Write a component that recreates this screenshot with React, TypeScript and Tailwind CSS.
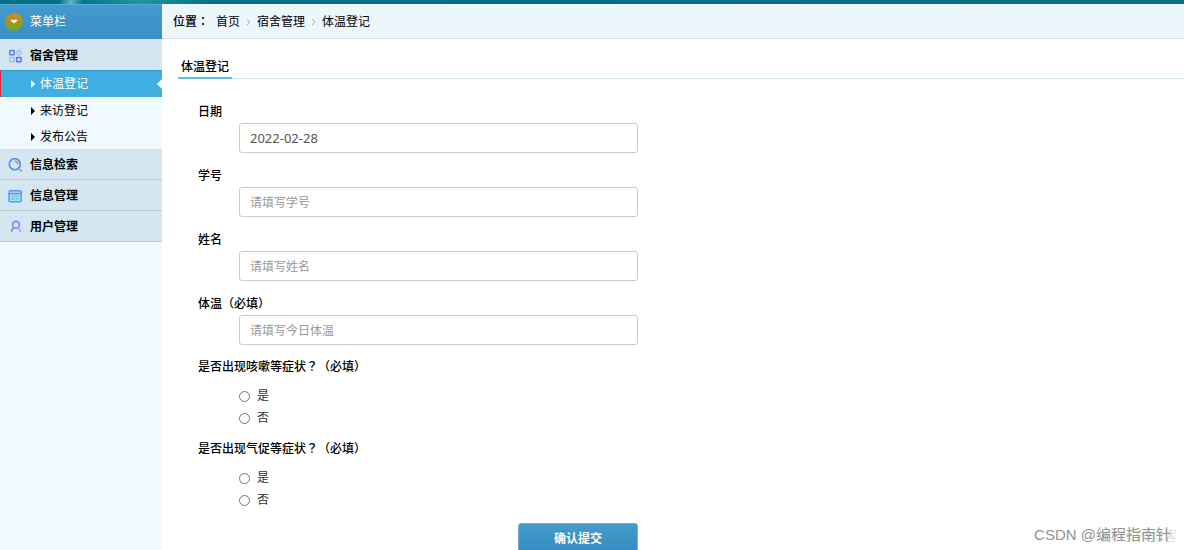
import { useState } from "react";

type Field = { id: string; label: string; placeholder?: string; value?: string };

const fields: Field[] = [
  { id: "date", label: "日期", value: "2022-02-28" },
  { id: "student", label: "学号", placeholder: "请填写学号" },
  { id: "name", label: "姓名", placeholder: "请填写姓名" },
  { id: "temperature", label: "体温（必填）", placeholder: "请填写今日体温" },
];

const questions = [
  { id: "cough", label: "是否出现咳嗽等症状", note: "（必填）" },
  { id: "breath", label: "是否出现气促等症状", note: "（必填）" },
];

const submenu = ["体温登记", "来访登记", "发布公告"];

function MenuIcon() {
  return (
    <svg viewBox="0 0 18 18" className="size-[18px]" aria-hidden="true">
      <defs>
        <linearGradient id="badge" x1="0" y1="0" x2="0" y2="1">
          <stop offset="0" stopColor="#d88a12" />
          <stop offset="0.5" stopColor="#a9931a" />
          <stop offset="1" stopColor="#68ad1c" />
        </linearGradient>
      </defs>
      <circle cx="9" cy="9" r="8.8" fill="url(#badge)" />
      <path d="M5.8 6.8h6.4v1L9 10.6 5.8 7.8z" fill="#fff" />
    </svg>
  );
}

function GridIcon() {
  return (
    <svg viewBox="0 0 14 14" className="size-3.5" fill="none" strokeWidth="1.5" aria-hidden="true">
      <rect x="1.8" y="1.4" width="4.4" height="4.4" rx="0.5" stroke="#5b7cf0" />
      <path d="M10.8 0.9l2.7 2.7-2.7 2.7-2.7-2.7z" stroke="#a9c1f5" />
      <rect x="1.8" y="8.4" width="4.4" height="4.4" rx="0.5" stroke="#a9bdf8" />
      <rect x="8.6" y="8.4" width="4.4" height="4.4" rx="0.5" stroke="#5b72f0" />
    </svg>
  );
}

function SearchIcon() {
  return (
    <svg viewBox="0 0 14 14" className="size-3.5" fill="none" strokeWidth="1.6" strokeLinecap="round" aria-hidden="true">
      <circle cx="6.8" cy="6.2" r="5.5" stroke="#4593f3" />
      <path d="M7 3.3a3 3 0 0 1 2.7 2.7M11.8 11.5l1.7 1.5" stroke="#f06fae" />
    </svg>
  );
}

function WindowIcon() {
  return (
    <svg viewBox="0 0 14 14" className="size-3.5" fill="none" aria-hidden="true">
      <rect x="1" y="1.7" width="12.2" height="11" rx="1.2" fill="#b5d9f2" stroke="#5d96f3" strokeWidth="1.5" />
      <path d="M1 4.6h12" stroke="#5d96f3" strokeWidth="1.5" />
      <path d="M3.2 7.2h2.2M6.4 7.2h4.4M3.2 9.8h4M8.3 9.8h2.5" stroke="#58d5c3" strokeWidth="1.5" />
    </svg>
  );
}

function UserIcon() {
  return (
    <svg viewBox="0 0 14 14" className="size-3.5" fill="none" strokeWidth="1.6" strokeLinecap="round" aria-hidden="true">
      <circle cx="8" cy="4.8" r="3.4" stroke="#8a7df2" />
      <path d="M5.8 7.8Q3.8 9 3.6 11.5" stroke="#8a7df2" />
      <path d="M10.2 7.8Q12 9 12.5 11.5" stroke="#d68cf4" />
    </svg>
  );
}

function Chevron() {
  return (
    <svg viewBox="0 0 5 8" className="mx-[6px] h-2 w-[5px]" fill="none" stroke="#98b3bd" aria-hidden="true">
      <path d="M1 1l3 3-3 3" />
    </svg>
  );
}

const sections = [
  { title: "信息检索", Icon: SearchIcon },
  { title: "信息管理", Icon: WindowIcon },
  { title: "用户管理", Icon: UserIcon },
];

export default function App() {
  const [answers, setAnswers] = useState<Record<string, string>>({});

  return (
    <div className="relative flex h-screen flex-col overflow-hidden bg-white font-['Noto_Sans','Noto_Sans_CJK_SC',sans-serif] text-xs text-black">
      <header className="h-1 shrink-0 bg-[linear-gradient(100deg,#087084_0%,#087084_5%,#5eb5c5_6%,#087689_7%,#2591a2_12%,#066e84_18%,#056c86_45%,#087084_100%)]" />
      <div className="flex min-h-0 flex-1">
        <aside className="flex w-[162px] shrink-0 flex-col bg-[#f0f9fd]">
          <h2 className="flex h-[35px] items-center gap-[7px] border-t border-[#54afe0] bg-linear-to-b from-[#4599cd] to-[#3790c6] pl-[5px] text-white">
            <MenuIcon />
            菜单栏
          </h2>
          <nav>
            <a href="#dorm" className="flex h-[31px] items-center gap-2 bg-[#d4e7f0] pt-0.5 pl-2 font-bold">
              <GridIcon />
              宿舍管理
            </a>
            <ul>
              {submenu.map((item, index) => (
                <li key={item}>
                  <a
                    href={`#sub-${index}`}
                    className={
                      index === 0
                        ? "flex h-[27px] items-center border-t border-l border-t-[#3598ca] border-l-[#e22b32] bg-[#3eafe0] pl-[30px] text-white"
                        : "flex h-[26px] items-center pt-0.5 pl-[31px]"
                    }
                  >
                    <svg viewBox="0 0 4 8" className="mr-[5px] h-2 w-1" fill="currentColor" aria-hidden="true">
                      <path d="M0 0l4 4-4 4z" />
                    </svg>
                    {item}
                    {index === 0 && (
                      <svg viewBox="0 0 5 10" className="ml-auto h-2.5 w-[5px]" fill="#fff" aria-hidden="true">
                        <path d="M5 0v10L0 5z" />
                      </svg>
                    )}
                  </a>
                </li>
              ))}
            </ul>
            {sections.map(({ title, Icon }) => (
              <a
                key={title}
                href={`#${title}`}
                className="flex h-[31px] items-center gap-2 border-b border-[#b5cad3] bg-[#d4e7f0] pt-0.5 pl-2 font-bold"
              >
                <Icon />
                {title}
              </a>
            ))}
          </nav>
        </aside>

        <main className="min-w-0 flex-1">
          <nav className="flex h-[35px] items-center border-b border-[#d5e4ea] bg-[#edf6fa] pt-0.5 pl-[11px]">
            <span className="mr-[7px] font-medium">
              位置<span className="font-['Noto_Sans_CJK_TC',sans-serif] leading-none">：</span>
            </span>
            <a href="#home">首页</a>
            <Chevron />
            <a href="#dorm">宿舍管理</a>
            <Chevron />
            <a href="#temperature">体温登记</a>
          </nav>

          <div className="pl-4">
            <div className="mt-[15px] flex border-b border-[#d3e5ea]">
              <h1 className="-mb-px border-b-2 border-[#5bc0e8] px-[3px] pt-0.5 text-xs leading-[21px] font-medium">体温登记</h1>
            </div>

            <form className="mt-5 max-w-[460px] pl-5" onSubmit={(e) => e.preventDefault()}>
              {fields.map((f) => (
                <div key={f.id} className="mb-2.5">
                  <label htmlFor={f.id} className="block pt-0.5 leading-[22px] font-medium">
                    {f.label}
                  </label>
                  <div className="pl-[41px]">
                    <input
                      id={f.id}
                      type="text"
                      defaultValue={f.value}
                      placeholder={f.placeholder}
                      className="block h-[30px] w-full rounded-[3px] border border-[#ccc] bg-white px-2.5 text-[13px] text-[#555] placeholder:text-xs placeholder:text-[#999]"
                    />
                  </div>
                </div>
              ))}
              {questions.map((q) => (
                <fieldset key={q.id} className="mb-2">
                  <legend className="mb-1.5 leading-6 font-medium">
                    {q.label}
                    <span className="font-['Noto_Sans_CJK_TC',sans-serif] leading-none">？</span>
                    {q.note}
                  </legend>
                  {["是", "否"].map((option) => (
                    <label key={option} className="flex h-[22px] items-center gap-[7px] pl-[41px] text-[#333]">
                      <input
                        type="radio"
                        name={q.id}
                        value={option}
                        checked={answers[q.id] === option}
                        onChange={() => setAnswers({ ...answers, [q.id]: option })}
                        className="size-[11px] appearance-none rounded-full border border-[#767676] bg-white checked:border-4 checked:border-[#0075ff]"
                      />
                      {option}
                    </label>
                  ))}
                </fieldset>
              ))}
              <div className="flex justify-end pt-1">
                <button
                  type="submit"
                  className="h-8 w-[120px] rounded-[3px] border border-[#73afd2] bg-linear-to-b from-[#459bcd] to-[#3489c0] font-bold text-white"
                >
                  确认提交
                </button>
              </div>
            </form>
          </div>
        </main>
      </div>

      <div className="pointer-events-none absolute right-[7px] bottom-[5px] text-[13px] leading-5 text-[#dedede]">@51CTO博客</div>
      <div className="pointer-events-none absolute right-[13px] bottom-[5px] font-['Liberation_Sans','Noto_Sans_CJK_SC',sans-serif] text-[15px] leading-5 text-[#929292]">
        CSDN @编程指南针
      </div>
    </div>
  );
}
